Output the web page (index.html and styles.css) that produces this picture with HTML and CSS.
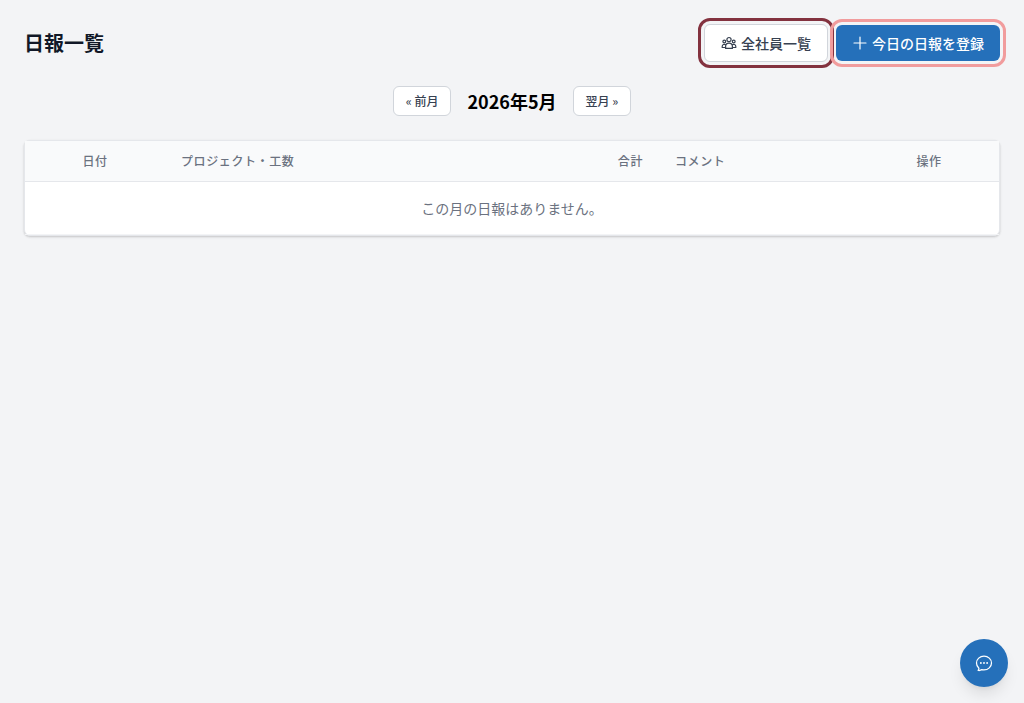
FILE: index.html
```html
<!DOCTYPE html>
<html lang="ja">
<head>
  <meta charset="UTF-8" />
  <meta name="viewport" content="width=device-width, initial-scale=1" />
  <title>日報一覧</title>
  <link rel="stylesheet" href="styles.css">
</head>
<body>

  <main class="container">
    <header class="page-header">
      <h1>日報一覧</h1>
      <div class="actions">
        <a href="#" class="btn btn-secondary">
          <svg class="icon icon-bold" viewBox="0 0 16 16" aria-hidden="true">
            <circle cx="8" cy="4.6" r="2.1" />
            <circle cx="3.3" cy="6.5" r="1.4" />
            <circle cx="12.7" cy="6.5" r="1.4" />
            <path d="M4.6 13.4v-1.9a3.4 3.4 0 0 1 6.8 0v1.9Z" />
            <path d="M4.6 12.5H1.2v-1.1a2.1 2.1 0 0 1 3.4-1.6M11.4 12.5h3.4v-1.1a2.1 2.1 0 0 0-3.4-1.6" />
          </svg>
          全社員一覧
        </a>
        <a href="#" class="btn btn-primary">
          <svg class="icon icon-bold" viewBox="0 0 16 16" aria-hidden="true">
            <path d="M8 2v12M2 8h12" />
          </svg>
          今日の日報を登録
        </a>
      </div>
    </header>

    <nav class="month-nav" aria-label="月の切り替え">
      <a href="#" class="btn-small">« 前月</a>
      <h2>2026年5月</h2>
      <a href="#" class="btn-small">翌月 »</a>
    </nav>

    <div class="card">
      <table class="report-table">
        <thead>
          <tr>
            <th class="col-date">日付</th>
            <th class="col-project">プロジェクト・工数</th>
            <th class="col-total">合計</th>
            <th class="col-comment">コメント</th>
            <th class="col-action">操作</th>
          </tr>
        </thead>
        <tbody>
          <tr>
            <td class="empty" colspan="5">この月の日報はありません。</td>
          </tr>
        </tbody>
      </table>
    </div>
  </main>

  <button type="button" class="chat-button" aria-label="チャット">
    <svg class="icon" viewBox="0 0 24 24" aria-hidden="true">
      <path d="M8.625 12a.375.375 0 1 1-.75 0 .375.375 0 0 1 .75 0Zm0 0H8.25m4.125 0a.375.375 0 1 1-.75 0 .375.375 0 0 1 .75 0Zm0 0H12m4.125 0a.375.375 0 1 1-.75 0 .375.375 0 0 1 .75 0Zm0 0h-.375M21 12c0 4.556-4.03 8.25-9 8.25a9.764 9.764 0 0 1-2.555-.337A5.972 5.972 0 0 1 5.41 20.97a5.969 5.969 0 0 1-.474-.065 4.48 4.48 0 0 0 .978-2.025c.09-.457-.133-.901-.467-1.226C3.93 16.178 3 14.189 3 12c0-4.556 4.03-8.25 9-8.25s9 3.694 9 8.25Z" />
    </svg>
  </button>

</body>
</html>
```

FILE: styles.css
```css
* {
  box-sizing: border-box;
}

body {
  margin: 0;
  min-height: 100vh;
  background: #f3f4f6;
  color: #000;
  font-family: "Noto Sans CJK JP", sans-serif;
  font-size: 14px;
  line-height: 20px;
}

h1, h2 {
  margin: 0;
  font-weight: 700;
  line-height: 28px;
}

h1 {
  font-size: 20px;
  color: #111827;
}

h2 {
  font-size: 18px;
}

a {
  text-decoration: none;
}

.container {
  padding: 24px;
}

.page-header {
  display: flex;
  justify-content: space-between;
  align-items: center;
  margin-bottom: 24px;
}

.actions {
  display: flex;
  align-items: center;
  gap: 8px;
}

/* Buttons */
.btn {
  display: inline-flex;
  align-items: center;
  gap: 4px;
  padding: 8px 16px;
  border-radius: 6px;
  font-weight: 500;
  outline-style: solid;
  outline-width: 3px;
  outline-offset: 3px;
}

.btn-secondary {
  background: #fff;
  border: 1px solid #d1d5db;
  color: #374151;
  outline-color: #83323f;
}

.btn-primary {
  background: #2570ba;
  color: #fff;
  outline-color: #f19c9d;
}

.btn-small {
  padding: 6px 12px;
  background: #fff;
  border: 1px solid #d1d5db;
  border-radius: 6px;
  color: #374151;
  font-size: 12px;
  font-weight: 500;
  line-height: 16px;
}

.icon {
  width: 16px;
  height: 16px;
  fill: none;
  stroke: currentColor;
  stroke-width: 1.5;
  stroke-linecap: round;
  stroke-linejoin: round;
}

.icon-bold {
  stroke-width: 1.2;
}

.month-nav {
  display: flex;
  justify-content: center;
  align-items: center;
  gap: 16px;
  margin-bottom: 24px;
}

/* Report table */
.card {
  background: #fff;
  border: 1px solid #e5e7eb;
  border-radius: 6px;
  box-shadow: 0 1px 3px rgba(0, 0, 0, 0.1), 0 1px 2px rgba(0, 0, 0, 0.1);
}

.report-table {
  width: 100%;
  table-layout: fixed;
  border-collapse: separate;
  border-spacing: 0;
}

.report-table th {
  padding: 12px 16px;
  background: #f9fafb;
  border-bottom: 1px solid #e5e7eb;
  color: #6b7280;
  font-size: 12px;
  font-weight: 500;
  line-height: 16px;
  letter-spacing: 0.05em;
  text-align: left;
}

.report-table .col-date {
  width: 140px;
  text-align: center;
}

.report-table .col-total {
  width: 80px;
  text-align: right;
}

.report-table .col-comment {
  width: 200px;
}

.report-table .col-action {
  width: 140px;
  text-align: center;
}

.report-table td {
  padding: 16px;
  border-bottom: 1px solid #f3f4f6;
}

.report-table .empty {
  color: #6b7280;
  text-align: center;
}

/* Floating chat button */
.chat-button {
  position: fixed;
  right: 16px;
  bottom: 16px;
  display: flex;
  justify-content: center;
  align-items: center;
  width: 48px;
  height: 48px;
  padding: 0;
  border: none;
  border-radius: 50%;
  background: #2570ba;
  color: #fff;
  box-shadow: 0 10px 15px -3px rgba(0, 0, 0, 0.1), 0 4px 6px -4px rgba(0, 0, 0, 0.1);
  cursor: pointer;
}

.chat-button .icon {
  width: 20px;
  height: 20px;
}
```
